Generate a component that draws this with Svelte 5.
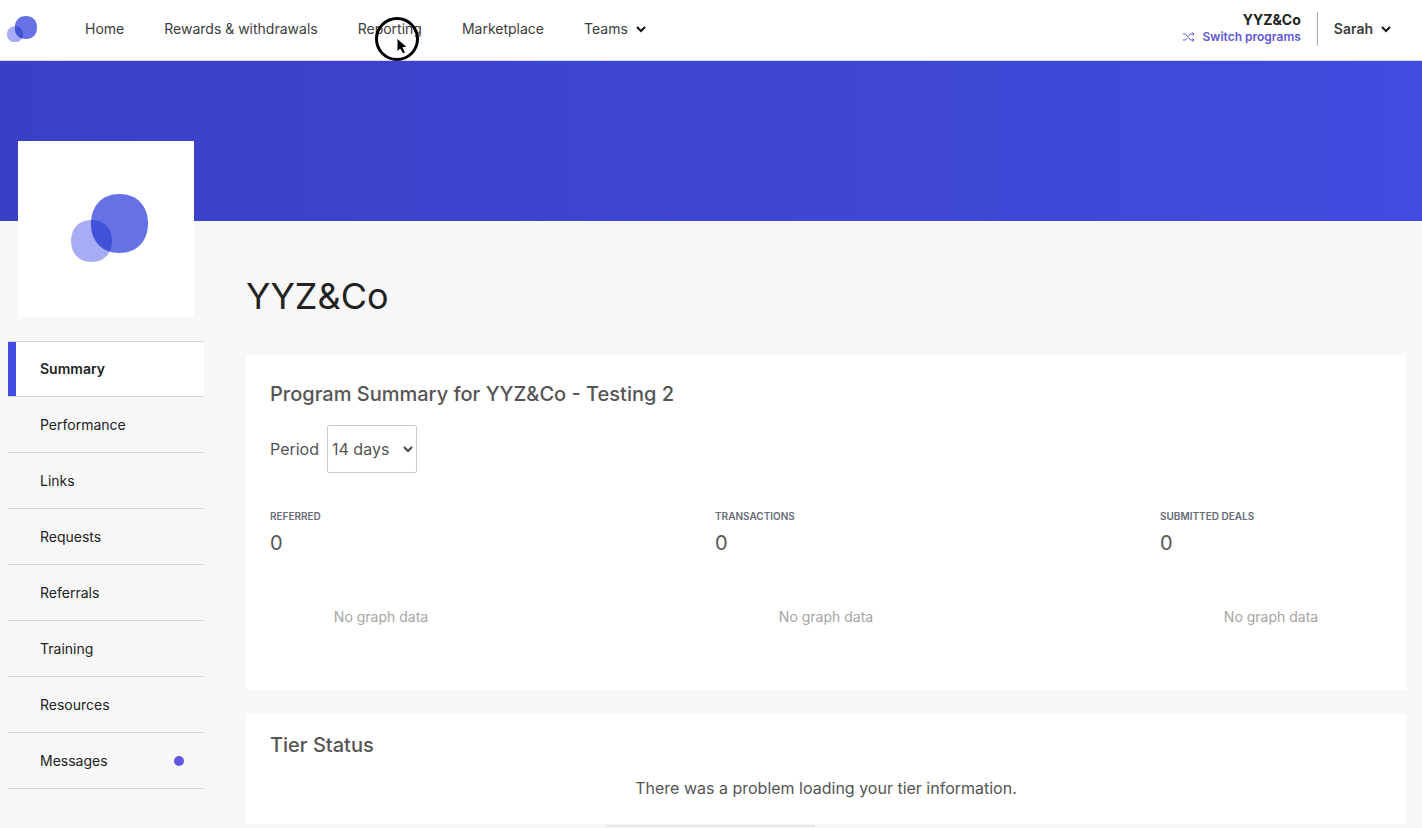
<script lang="ts">
	const navItems = ["Home", "Rewards & withdrawals", "Reporting", "Marketplace"];

	const sideItems = [
		{ label: "Summary", active: true },
		{ label: "Performance" },
		{ label: "Links" },
		{ label: "Requests" },
		{ label: "Referrals" },
		{ label: "Training" },
		{ label: "Resources" },
		{ label: "Messages", unread: true },
	];

	const stats = [
		{ label: "Referred", value: 0 },
		{ label: "Transactions", value: 0 },
		{ label: "Submitted deals", value: 0 },
	];

	const periods = ["7 days", "14 days", "30 days"];
	let period = $state("14 days");
</script>

{#snippet logo()}
	<svg class="logo" viewBox="0 0 77 68" aria-hidden="true">
		<defs>
			<clipPath id="logo-clip">
				<path d="M48.500 0C66 0 77 12 77 29.500S66 59 48.500 59 20 47 20 29.500 31 0 48.500 0Z" />
			</clipPath>
		</defs>
		<path fill="#a6adf5" d="M20.500 26C33 26 41 34.500 41 47S33 68 20.500 68 0 59.500 0 47 8 26 20.500 26Z" />
		<path fill="#6771e6" d="M48.500 0C66 0 77 12 77 29.500S66 59 48.500 59 20 47 20 29.500 31 0 48.500 0Z" />
		<path clip-path="url(#logo-clip)" fill="#4151d8" d="M20.500 26C33 26 41 34.500 41 47S33 68 20.500 68 0 59.500 0 47 8 26 20.500 26Z" />
	</svg>
{/snippet}

{#snippet chevron()}
	<svg class="chevron" viewBox="0 0 10 10" aria-hidden="true">
		<path d="M1 3l4 4 4-4" />
	</svg>
{/snippet}

<div class="page">
	<header>
		<a class="brand" href="#home" aria-label="YYZ&Co">{@render logo()}</a>
		<nav class="top-nav">
			{#each navItems as item}
				<a href="#{item}">{item}</a>
			{/each}
			<button>Teams {@render chevron()}</button>
		</nav>
		<div class="account">
			<div class="program">
				<strong>YYZ&amp;Co</strong>
				<a href="#switch">
					<svg class="shuffle" viewBox="0 0 12 10" aria-hidden="true">
						<path d="M0 2h2.500l5 6H11M0 8h2.500l1.500-1.800M6 3.800L7.500 2H11M9.500 0.500L11 2 9.500 3.500M9.500 6.500L11 8 9.500 9.500" />
					</svg>
					Switch programs
				</a>
			</div>
			<button class="user">Sarah {@render chevron()}</button>
		</div>
	</header>

	<div class="banner"></div>

	<div class="layout">
		<aside>
			<div class="logo-box">{@render logo()}</div>
			<ul>
				{#each sideItems as item}
					<li class:active={item.active}>
						<a href="#{item.label}">
							{item.label}
							{#if item.unread}<span class="dot"></span>{/if}
						</a>
					</li>
				{/each}
			</ul>
		</aside>

		<main>
			<h1>YYZ&amp;Co</h1>

			<section class="card">
				<h2>Program Summary for YYZ&amp;Co - Testing 2</h2>
				<div class="period">
					<label for="period">Period</label>
					<div class="select">
						<select id="period" bind:value={period}>
							{#each periods as option}
								<option>{option}</option>
							{/each}
						</select>
						{@render chevron()}
					</div>
				</div>
				<div class="stats">
					{#each stats as stat}
						<div class="stat">
							<h3>{stat.label}</h3>
							<p class="value">{stat.value}</p>
							<p class="empty">No graph data</p>
						</div>
					{/each}
				</div>
			</section>

			<section class="card tier">
				<h2>Tier Status</h2>
				<p>There was a problem loading your tier information.</p>
			</section>
		</main>
	</div>

	<div class="drawer-edge"></div>

	<svg class="pointer" viewBox="0 0 44 44" aria-hidden="true">
		<circle cx="22" cy="22" r="20.500" />
		<path d="M22 21v14l3-3 3 5 2.500-1.500-2.500-5h4.500Z" />
	</svg>
</div>

<style>
	:global(body) {
		margin: 0;
		background: #f7f7f7;
	}

	.page {
		position: relative;
		min-height: 100vh;
		overflow: hidden;
		background: #f7f7f7;
		color: #555;
		font-family: Inter, "Liberation Sans", sans-serif;
		font-size: 16px;
		line-height: 24px;
	}

	.page * {
		box-sizing: border-box;
	}

	a {
		color: inherit;
		text-decoration: none;
	}

	button {
		display: flex;
		align-items: center;
		gap: 8px;
		padding: 0;
		border: 0;
		background: none;
		color: inherit;
		font: inherit;
		cursor: pointer;
	}

	h1,
	h2,
	h3,
	p,
	ul {
		margin: 0;
		padding: 0;
		font-weight: 400;
	}

	.logo {
		display: block;
		width: 100%;
	}

	.chevron {
		width: 10px;
		height: 10px;
		fill: none;
		stroke: #111;
		stroke-width: 2;
	}

	header {
		display: flex;
		align-items: center;
		height: 61px;
		padding: 0 31px 2px 7px;
		border-bottom: 1px solid #d5d7ea;
		background: #fff;
		color: #3c3c3c;
		font-size: 14px;
		line-height: 18px;
	}

	.brand {
		width: 30px;
	}

	.top-nav {
		display: flex;
		gap: 40px;
		margin-left: 48px;
	}

	.account {
		display: flex;
		align-items: center;
		margin-left: auto;
	}

	.program {
		display: flex;
		flex-direction: column;
		align-items: flex-end;
		padding-right: 16px;
		border-right: 1px solid #aaa;
	}

	.program strong {
		color: #222;
		line-height: 16px;
		font-weight: 700;
	}

	.program a {
		display: flex;
		align-items: center;
		gap: 8px;
		color: #5e58d6;
		font-size: 12px;
		line-height: 18px;
		font-weight: 600;
	}

	.shuffle {
		width: 12px;
		height: 10px;
		fill: none;
		stroke: currentColor;
	}

	.user {
		margin-left: 16px;
		font-weight: 600;
	}

	.banner {
		height: 160px;
		background: linear-gradient(90deg, #3a40c6, #3e45d0 50%, #424bde);
	}

	.layout {
		display: flex;
		gap: 42px;
		padding: 0 16px 4px 8px;
	}

	aside {
		flex: none;
		width: 196px;
		margin-top: -80px;
	}

	.logo-box {
		display: flex;
		align-items: center;
		width: 176px;
		height: 176px;
		margin: 0 auto 24px;
		padding: 0 46px 2px 53px;
		background: #fff;
	}

	ul {
		list-style: none;
	}

	li {
		height: 56px;
		border-bottom: 1px solid #d6d7da;
		color: #222;
		font-size: 14px;
	}

	li:first-child {
		border-top: 1px solid #d6d7da;
	}

	li a {
		display: flex;
		align-items: center;
		justify-content: space-between;
		height: 100%;
		padding: 0 20px 0 32px;
	}

	.active a {
		padding-left: 24px;
		border-left: 8px solid #414bdf;
		background: #fff;
		font-weight: 600;
	}

	.dot {
		width: 10px;
		height: 10px;
		border-radius: 50%;
		background: #5e58e0;
	}

	main {
		flex: 1;
		min-width: 0;
	}

	h1 {
		padding: 51px 0 35px;
		color: #222;
		font-size: 36px;
		line-height: 48px;
	}

	.card {
		padding: 24px;
		background: #fff;
	}

	h2 {
		font-size: 20px;
		line-height: 30px;
		font-weight: 500;
	}

	.period {
		display: flex;
		align-items: center;
		gap: 8px;
		margin-top: 16px;
	}

	.select {
		position: relative;
	}

	select {
		width: 90px;
		height: 48px;
		padding: 0 4px;
		border: 1px solid #ccc;
		border-radius: 2px;
		appearance: none;
		background: #fff;
		color: inherit;
		font: inherit;
	}

	.select .chevron {
		position: absolute;
		top: 19px;
		right: 4px;
		stroke: #444;
		pointer-events: none;
	}

	.stats {
		display: flex;
		justify-content: space-between;
		margin-top: 35px;
	}

	.stat {
		width: 222px;
	}

	h3 {
		color: #666b78;
		font-size: 10px;
		line-height: 16px;
		font-weight: 600;
		text-transform: uppercase;
	}

	.value {
		margin-top: 7px;
		font-size: 20px;
		line-height: 24px;
	}

	.empty {
		padding: 50px 0 37px;
		color: #a5a5a5;
		font-size: 14px;
		text-align: center;
	}

	.tier {
		margin-top: 24px;
		padding: 16px 24px 24px;
	}

	.tier p {
		margin-top: 16px;
		text-align: center;
	}

	.drawer-edge {
		position: absolute;
		bottom: 0;
		left: 50%;
		width: 210px;
		height: 3px;
		margin-left: -106px;
		border-top: 1px solid #e6e6e6;
		background: #eee;
	}

	/* click highlight over the navigation */
	.pointer {
		position: absolute;
		top: 17px;
		left: 375px;
		width: 44px;
		height: 44px;
		pointer-events: none;
	}

	.pointer circle {
		fill: none;
		stroke: #000;
		stroke-width: 3;
	}

	.pointer path {
		fill: #000;
		stroke: #fff;
		stroke-width: 1;
	}
</style>
